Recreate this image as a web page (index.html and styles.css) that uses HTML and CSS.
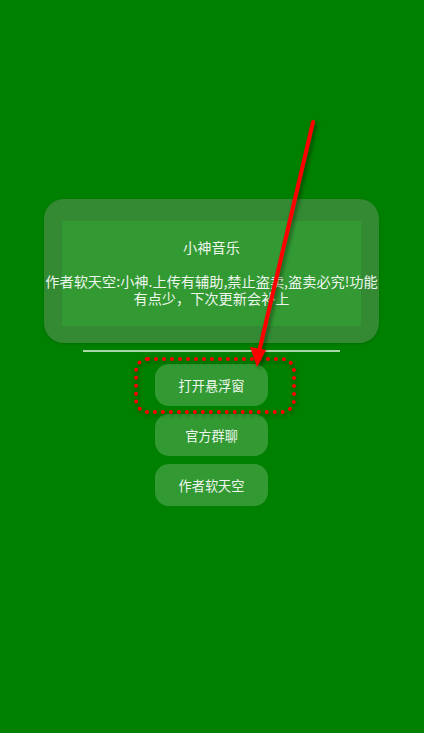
FILE: index.html
```html
<!DOCTYPE html>
<html lang="zh">
<head>
<meta charset="utf-8">
<link rel="stylesheet" href="styles.css">
</head>
<body>
<main class="page">
  <section class="card">
    <div class="card-inner">
      <p class="card-text">小神音乐<br><br>作者软天空:小神.上传有辅助,禁止盗卖,盗卖必究!功能有点少，下次更新会补上</p>
    </div>
  </section>
  <hr class="divider">
  <nav class="actions">
    <button class="btn">打开悬浮窗</button>
    <button class="btn">官方群聊</button>
    <button class="btn">作者软天空</button>
  </nav>
</main>
<div class="highlight"></div>
<svg class="arrow" width="424" height="733" viewBox="0 0 424 733">
  <defs>
    <filter id="sh" x="-50%" y="-50%" width="200%" height="200%">
      <feDropShadow dx="2" dy="2" stdDeviation="2" flood-color="#000" flood-opacity="0.45"/>
    </filter>
  </defs>
  <g filter="url(#sh)">
    <line x1="313" y1="122" x2="259" y2="352" stroke="#ff0000" stroke-width="4" stroke-linecap="round"/>
    <polygon points="257,367 250,347 266,350" fill="#ff0000"/>
  </g>
</svg>
</body>
</html>
```

FILE: styles.css
```css
html, body {
  margin: 0;
  padding: 0;
}
body {
  background: #008000;
  width: 424px;
  height: 733px;
  overflow: hidden;
  position: relative;
  font-family: "Noto Sans CJK SC", "Noto Sans", sans-serif;
  color: #eef6ee;
}
.page {
  display: flex;
  flex-direction: column;
  padding-top: 199px;
}
.card {
  margin-left: 44px;
  width: 335px;
  height: 144px;
  box-sizing: border-box;
  padding: 22px 18px 17px 18px;
  background: #338a33;
  border-radius: 20px;
  box-shadow: 0 1px 3px rgba(0,0,0,0.15);
}
.card-inner {
  height: 100%;
  background: #339a33;
  display: flex;
  align-items: center;
  justify-content: center;
}
.card-text {
  margin: 0 -18px;
  width: 335px;
  text-align: center;
  font-size: 14.2px;
  line-height: 17px;
  position: relative;
  top: -1px;
}
.divider {
  margin: 7px 0 0 83px;
  width: 257px;
  height: 2px;
  border: none;
  background: #a8d8a8;
}
.actions {
  display: flex;
  flex-direction: column;
  align-items: center;
  gap: 8px;
  margin-top: 12px;
  margin-left: -1px;
}
.btn {
  width: 113px;
  height: 42px;
  border: none;
  border-radius: 14px;
  background: #339a33;
  color: #eef6ee;
  font-family: "Noto Sans CJK SC", "Noto Sans", sans-serif;
  font-size: 13.2px;
  padding: 0;
}
.highlight {
  position: absolute;
  left: 134px;
  top: 357px;
  width: 162px;
  height: 57px;
  box-sizing: border-box;
  border: 4px dotted #ff0000;
  border-radius: 14px;
  filter: drop-shadow(1px 2px 2px rgba(0,0,0,0.45));
}
.arrow {
  position: absolute;
  left: 0;
  top: 0;
  pointer-events: none;
}
```
